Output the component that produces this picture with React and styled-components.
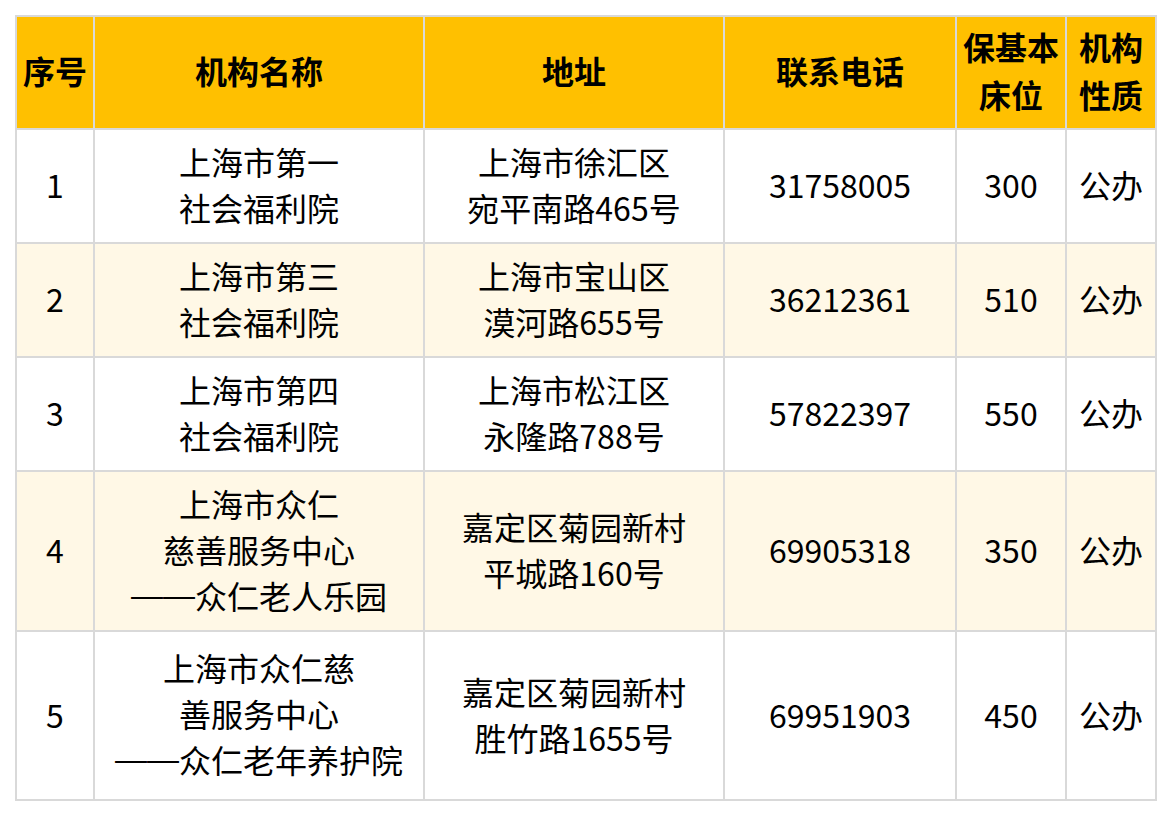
import styled, { createGlobalStyle } from 'styled-components'

const GlobalStyle = createGlobalStyle`
  body {
    margin: 0;
    background: #fff;
    font-family: "Noto Sans CJK SC", "Noto Sans", sans-serif;
  }
`

const columns = [78, 330, 300, 232, 110, 90]

const rows = [
  { no: 1, name: ['上海市第一', '社会福利院'], addr: ['上海市徐汇区', '宛平南路465号'], tel: '31758005', beds: 300, type: '公办', height: 114 },
  { no: 2, name: ['上海市第三', '社会福利院'], addr: ['上海市宝山区', '漠河路655号'], tel: '36212361', beds: 510, type: '公办', height: 114 },
  { no: 3, name: ['上海市第四', '社会福利院'], addr: ['上海市松江区', '永隆路788号'], tel: '57822397', beds: 550, type: '公办', height: 114 },
  { no: 4, name: ['上海市众仁', '慈善服务中心', '——众仁老人乐园'], addr: ['嘉定区菊园新村', '平城路160号'], tel: '69905318', beds: 350, type: '公办', height: 160 },
  { no: 5, name: ['上海市众仁慈', '善服务中心', '——众仁老年养护院'], addr: ['嘉定区菊园新村', '胜竹路1655号'], tel: '69951903', beds: 450, type: '公办', height: 169 }
]

const headers = [['序号'], ['机构名称'], ['地址'], ['联系电话'], ['保基本', '床位'], ['机构', '性质']]

// a leading "——" is drawn full width, as in the source sheet
function Line({ text }) {
  if (text.startsWith('——')) {
    return (
      <>
        <Dash>——</Dash>
        {text.slice(2)}
      </>
    )
  }
  return text
}

function Lines({ items }) {
  return items.map((line, i) => (
    <span key={i}>
      {i > 0 && <br />}
      <Line text={line} />
    </span>
  ))
}

export default function App() {
  return (
    <>
      <GlobalStyle />
      <Page>
        <Table>
          <colgroup>
            {columns.map((w, i) => (
              <col key={i} style={{ width: w }} />
            ))}
          </colgroup>
          <thead>
            <HeadRow>
              {headers.map((h, i) => (
                <HeadCell key={i}>
                  <Lines items={h} />
                </HeadCell>
              ))}
            </HeadRow>
          </thead>
          <tbody>
            {rows.map((r, i) => (
              <BodyRow key={r.no} $striped={i % 2 === 1} style={{ height: r.height }}>
                <Cell>{r.no}</Cell>
                <Cell><Lines items={r.name} /></Cell>
                <Cell><Lines items={r.addr} /></Cell>
                <Cell>{r.tel}</Cell>
                <Cell>{r.beds}</Cell>
                <Cell>{r.type}</Cell>
              </BodyRow>
            ))}
          </tbody>
        </Table>
      </Page>
    </>
  )
}

const Page = styled.div`
  padding: 15px 0 0 15px;
`

const Table = styled.table`
  width: 1142px;
  table-layout: fixed;
  border-collapse: separate;
  border-spacing: 0;
  border-top: 2px solid #d9d9d9;
  border-left: 2px solid #d9d9d9;
  font-size: 32px;
  color: #000;
`

const HeadRow = styled.tr`
  height: 113px;
  background: #ffc000;
`

const BodyRow = styled.tr`
  background: ${(p) => (p.$striped ? '#fff8e6' : '#fff')};
`

const HeadCell = styled.th`
  box-sizing: border-box;
  padding: 0 0 5px;
  border-right: 2px solid #d9d9d9;
  border-bottom: 2px solid #d9d9d9;
  font-weight: 700;
  line-height: 48px;
  text-align: center;
  vertical-align: middle;
`

const Cell = styled.td`
  box-sizing: border-box;
  padding: 0 0 4px;
  border-right: 2px solid #d9d9d9;
  border-bottom: 2px solid #d9d9d9;
  line-height: 46px;
  text-align: center;
  vertical-align: middle;
  white-space: nowrap;
`

const Dash = styled.span`
  font-family: "Liberation Sans", Arial, sans-serif;
  vertical-align: 0.08em;
`
